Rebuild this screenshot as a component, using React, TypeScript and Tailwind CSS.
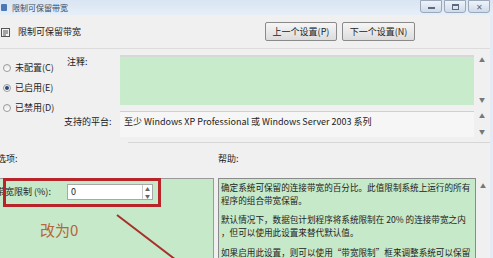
import React from 'react'

const font = { fontFamily: '"Noto Sans CJK SC", "Noto Sans", sans-serif' }

function Radio({ label, checked }: { label: string; checked?: boolean }) {
  return (
    <div className="flex items-center gap-[4px] h-[20px]">
      <span className="w-[8px] h-[8px] rounded-full border border-[#9a9a9a] bg-gradient-to-b from-[#e8e8e8] to-white flex items-center justify-center">
        {checked && <span className="w-[4px] h-[4px] rounded-full bg-[#2a4a7a]" />}
      </span>
      <span className="text-[9px] text-[#222]">{label}</span>
    </div>
  )
}

function Arrows() {
  return (
    <div className="w-[16px] flex flex-col justify-between items-center py-[2px] text-[6px] text-[#777] leading-none">
      <span>▲</span>
      <span>▼</span>
    </div>
  )
}

export default function App() {
  return (
    <div className="relative w-[493px] h-[258px] overflow-hidden bg-[#f0f0f0] text-[#222]" style={font}>
      {/* ── Title bar ───────────────────────────────────────────── */}
      <div className="h-[15px] flex items-center bg-gradient-to-b from-[#d9e5f2] to-[#e6eef8]">
        <span className="w-[6px] h-[7px] bg-[#4a79b5] rounded-[1px] ml-[1px]" />
        <span className="ml-[5px] text-[8px] text-[#3a4a60]">限制可保留带宽</span>
        <div className="ml-auto mr-[3px] flex gap-[2px] self-start">
          <div className="w-[22px] h-[13px] border border-[#9aa8ba] rounded-b-[3px] bg-gradient-to-b from-[#eef3f9] to-[#cfdbe9] flex items-end justify-center pb-[3px]">
            <span className="w-[7px] h-[2px] bg-[#5a6a80]" />
          </div>
          <div className="w-[22px] h-[13px] border border-[#9aa8ba] rounded-b-[3px] bg-gradient-to-b from-[#eef3f9] to-[#cfdbe9] flex items-center justify-center">
            <span className="w-[7px] h-[6px] border border-[#5a6a80] border-t-2" />
          </div>
          <div className="w-[22px] h-[13px] border border-[#9aa8ba] rounded-b-[3px] bg-gradient-to-b from-[#eef3f9] to-[#cfdbe9] flex items-center justify-center text-[8px] leading-none text-[#5a6a80]">
            ✕
          </div>
        </div>
      </div>

      {/* ── Heading row with nav buttons ────────────────────────── */}
      <div className="h-[33px] flex items-center pr-[78px]">
        <svg width="10" height="10" viewBox="0 0 10 10" className="ml-[1px]">
          <rect x="0.5" y="1.5" width="8" height="8" fill="#f4f4f4" stroke="#555" />
          <rect x="2" y="3.5" width="5" height="1" fill="#555" />
          <rect x="2" y="5.5" width="5" height="1" fill="#555" />
          <rect x="2" y="7.5" width="3" height="1" fill="#555" />
        </svg>
        <span className="ml-[7px] text-[9px]">限制可保留带宽</span>
        <div className="ml-auto flex gap-[5px]">
          <button className="w-[72px] h-[19px] border border-[#8a8a8a] rounded-[2px] bg-gradient-to-b from-[#f6f6f6] to-[#dcdcdc] text-[9px]">
            上一个设置(P)
          </button>
          <button className="w-[73px] h-[19px] border border-[#8a8a8a] rounded-[2px] bg-gradient-to-b from-[#f6f6f6] to-[#dcdcdc] text-[9px]">
            下一个设置(N)
          </button>
        </div>
      </div>
      <div className="h-[1px] bg-[#dcdcdc] mr-[3px]" />

      {/* ── State / comment / platform ──────────────────────────── */}
      <div className="flex pt-[6px] pr-[3px]">
        <div className="w-[64px] pl-[3px] pt-[3px] flex flex-col">
          <Radio label="未配置(C)" />
          <Radio label="已启用(E)" checked />
          <Radio label="已禁用(D)" />
        </div>
        <div className="flex-1 flex flex-col gap-[6px]">
          <div className="flex">
            <span className="w-[56px] pl-[3px] text-[9px]">注释:</span>
            <div className="flex-1 h-[50px] border-t-2 border-[#d8d8d8] bg-[#c8ebcc]" />
            <div className="h-[50px] flex">
              <Arrows />
            </div>
          </div>
          <div className="flex">
            <span className="w-[56px] text-[9px] pt-[4px]">支持的平台:</span>
            <div className="flex-1 h-[26px] border-t border-[#d0d0d0] bg-[#f6f6f6] pl-[4px] pt-[3px] text-[9px]">
              至少 Windows XP Professional 或 Windows Server 2003 系列
            </div>
            <div className="h-[26px] flex">
              <Arrows />
            </div>
          </div>
        </div>
      </div>
      <div className="h-[1px] bg-[#d6d6d6] ml-[128px] mt-[5px] mr-[3px]" />

      {/* ── Options / help ──────────────────────────────────────── */}
      <div className="flex h-[22px] items-end text-[9px]">
        <span className="w-[218px] -ml-[3px]">选项:</span>
        <span className="ml-[3px]">帮助:</span>
      </div>
      <div className="flex mt-[13px] h-[90px] pr-[3px]">
        <div className="w-[214px] bg-[#c6e9c9] border-t border-r border-[#9a9a9a] pt-[4px]">
          <div className="flex items-center h-[17px]">
            <span className="-ml-[4px] w-[71px] text-[9px] whitespace-nowrap">带宽限制 (%):</span>
            <div className="w-[86px] h-[16px] border border-[#a8a8a8] bg-white flex">
              <span className="flex-1 pl-[3px] text-[9px] leading-[14px]">0</span>
              <div className="w-[10px] border-l border-[#c8c8c8] flex flex-col text-[5px] leading-[7px] text-[#666] items-center">
                <span>▲</span>
                <span>▼</span>
              </div>
            </div>
          </div>
        </div>
        <div className="w-[258px] ml-[4px] bg-[#c6e9c9] border border-[#8a8a8a] px-[2px] pt-[2px] text-[8.6px] leading-[13px] whitespace-nowrap overflow-hidden">
          <p>
            确定系统可保留的连接带宽的百分比。此值限制系统上运行的所有
            <br />
            程序的组合带宽保留。
          </p>
          <p className="mt-[6px]">
            默认情况下，数据包计划程序将系统限制在 20% 的连接带宽之内
            <br />
            ，但可以使用此设置来替代默认值。
          </p>
          <p className="mt-[7px]">如果启用此设置，则可以使用“带宽限制”框来调整系统可以保留</p>
        </div>
        <div className="flex-1 flex justify-center text-[6px] text-[#777] pt-[3px]">▲</div>
      </div>
      <div className="absolute right-0 top-[15px] bottom-0 w-[3px] bg-[#e4ebf4]" />

      {/* ── Annotation overlay ──────────────────────────────────── */}
      <div className="absolute left-[3px] top-[178px] w-[158px] h-[29px] border-[3px] border-[#b8242a]" />
      <span className="absolute left-[40px] top-[220px] text-[15px] leading-[20px] text-[#b8643c]">改为0</span>
      <svg className="absolute left-0 top-0" width="493" height="258">
        <line x1="117" y1="215" x2="176" y2="260" stroke="#a8302a" strokeWidth="2" />
      </svg>
    </div>
  )
}
